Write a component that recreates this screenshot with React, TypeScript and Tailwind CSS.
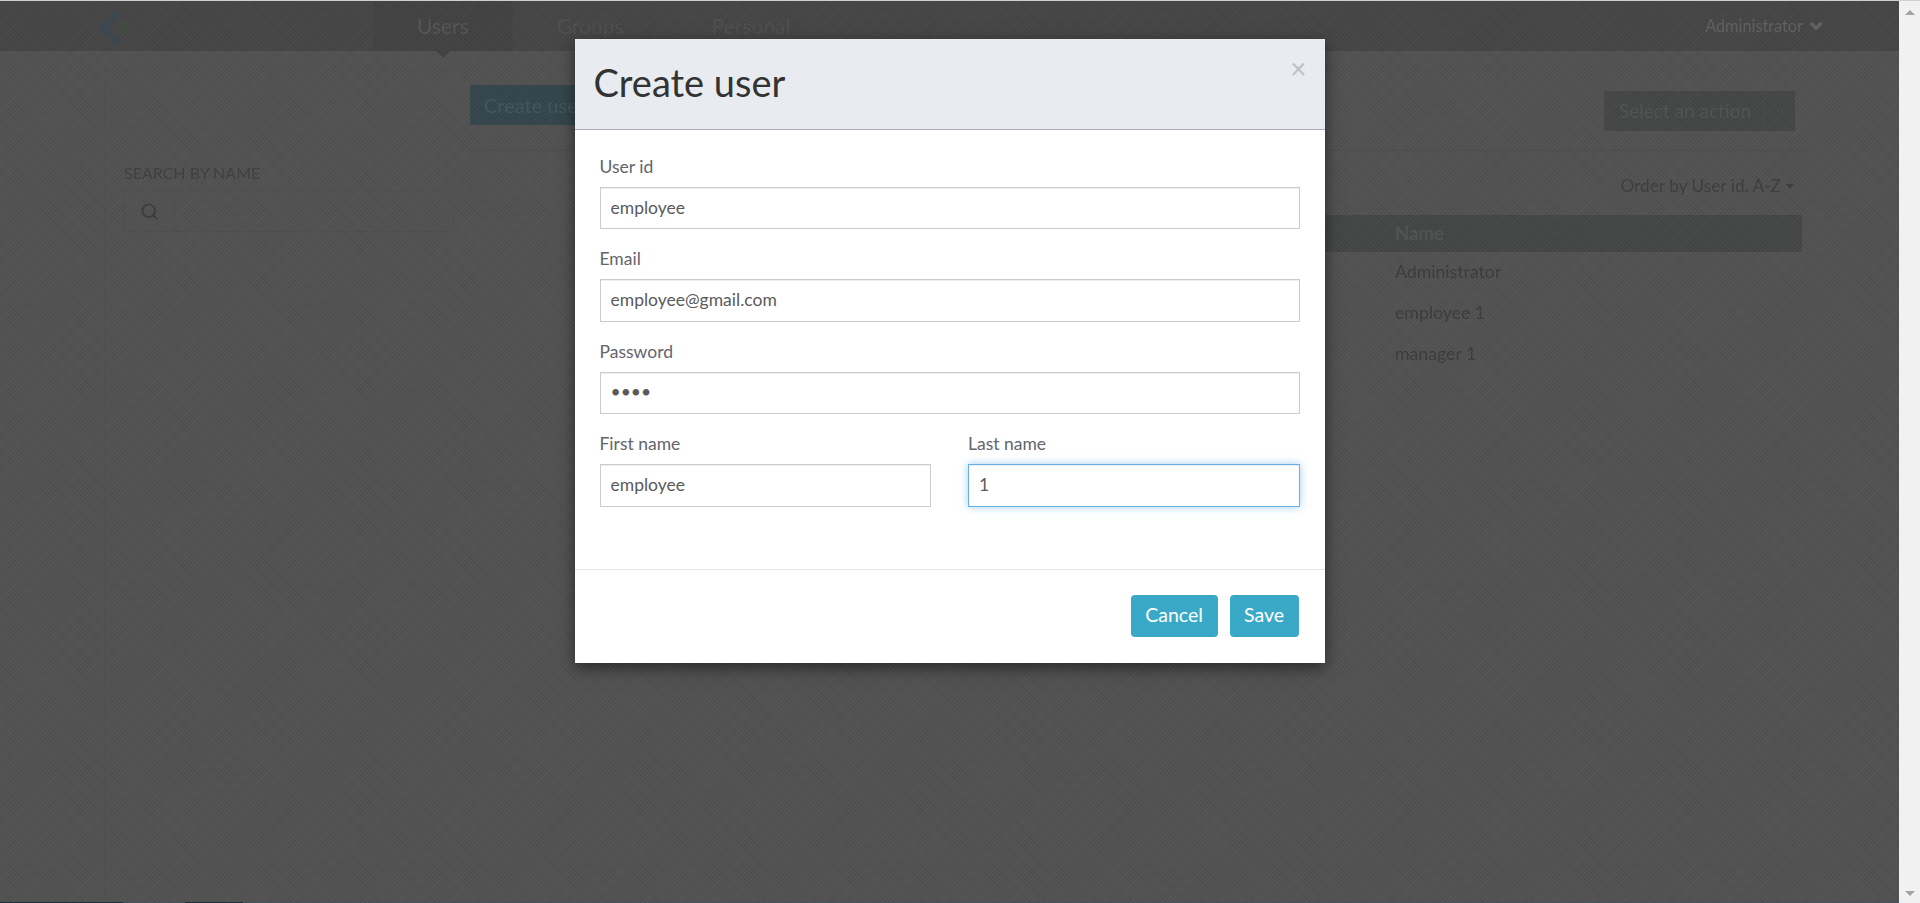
import { ChevronDown, Search } from "lucide-react";

const NAV = ["Users", "Groups", "Personal"];
const ROWS = ["Administrator", "employee 1", "manager 1"];

function Field({
  label,
  value,
  type = "text",
  focused = false,
}: {
  label: string;
  value: string;
  type?: string;
  focused?: boolean;
}) {
  return (
    <div className="mb-[20px]">
      <label className="block h-[25px] mb-[5px] text-[17.5px] leading-[20px] text-[#62656c]">{label}</label>
      <input
        readOnly
        type={type}
        defaultValue={value}
        className={
          focused
            ? "block w-full h-[42.4px] pl-[10px] pb-[2px] border border-[#66afe9] bg-white text-[17.5px] text-[#5a5a5a] outline-none shadow-[inset_0_1px_1px_rgba(0,0,0,0.075),0_0_8px_rgba(102,175,233,0.6)]"
            : "block w-full h-[42.4px] pl-[10px] pb-[2px] border border-[#ccc] bg-white text-[17.5px] text-[#5a5a5a] outline-none shadow-[inset_0_1px_1px_rgba(0,0,0,0.075)]"
        }
      />
    </div>
  );
}

function CreateUserModal() {
  return (
    <div className="mx-auto w-[750px] bg-white shadow-[0_5px_15px_rgba(0,0,0,0.5)]">
      <div className="flex justify-between h-[91px] pl-[19px] pr-[18px] bg-[#e8ecf0] border-b border-[#a9aeba]">
        <h4 className="mt-[21px] text-[38px] leading-[44px] text-[#333]">Create user</h4>
        <button className="mt-[13px] h-[32px] text-[28px] leading-[32px] text-[#bdbfc1]">×</button>
      </div>
      <div className="pt-[27px] px-[25px] pb-[42.4px]">
        <Field label="User id" value="employee" />
        <Field label="Email" value="employee@gmail.com" />
        <Field label="Password" value="1234" type="password" />
        <div className="grid grid-cols-2 gap-x-[37px]">
          <Field label="First name" value="employee" />
          <Field label="Last name" value="1" focused />
        </div>
      </div>
      <div className="flex justify-end gap-[12px] h-[94px] pt-[25px] pr-[26px] border-t border-[#e5e5e5]">
        <button className="h-[42px] w-[87px] pb-[2px] rounded-[4px] bg-[#39a9c7] text-[19.5px] text-white">Cancel</button>
        <button className="h-[42px] w-[69px] pb-[2px] rounded-[4px] bg-[#39a9c7] text-[19.5px] text-white">Save</button>
      </div>
    </div>
  );
}

function Page() {
  return (
    <div className="flex flex-col h-full bg-[#525252] blur-[0.5px]">
      <nav className="flex items-stretch h-[50px] shrink-0 bg-[#464646]">
        <div className="w-[373px] pl-[99px] pt-[11px]">
          <svg width="32" height="32" viewBox="0 0 32 32" fill="none">
            <path d="M18 2 L4 16 L18 30" stroke="#3a4650" strokeWidth="6" />
            <path d="M23 10 L28.5 16 L23 22" stroke="#404c40" strokeWidth="4" />
          </svg>
        </div>
        {NAV.map((item, i) => (
          <a
            key={item}
            className={
              i === 0
                ? "relative px-[44px] bg-[#434343] text-[21px] leading-[50px] text-[#555]"
                : "px-[44px] text-[21px] leading-[50px] text-[#4f4f4f]"
            }
          >
            {item}
            {i === 0 && (
              <span className="absolute left-[63px] top-[50px] border-x-[7px] border-t-[7px] border-x-transparent border-t-[#434343]" />
            )}
          </a>
        ))}
        <div className="ml-auto flex items-center gap-[4px] pr-[74px] text-[16.3px] text-[#606060]">
          Administrator
          <ChevronDown size={18} strokeWidth={4.5} />
        </div>
      </nav>

      <div className="flex flex-1 ml-[104px] mr-[85px] mt-[19px] border-t border-l border-[#4f4f4f]">
        <aside className="w-[365px] shrink-0 pl-[19px] pt-[92px]">
          <div className="h-[20px] mb-[7px] text-[16px] leading-[20px] text-[#404040]">SEARCH BY NAME</div>
          <div className="flex w-[330px] h-[42px] border border-[#4e4e4e]">
            <div className="flex items-center justify-center w-[50px] border-r border-[#4e4e4e] text-[#3e3e3e]">
              <Search size={19} strokeWidth={2.5} />
            </div>
          </div>
        </aside>

        <section className="flex-1 pt-[14px]">
          <div className="flex justify-between items-start h-[46px] pr-[19px]">
            <button className="h-[40px] px-[14px] bg-[#34464c] text-[20px] text-[#44565c]">Create user</button>
            <div className="flex mt-[6px] h-[40px] bg-[#454746] text-[19px] text-[#525453]">
              <span className="w-[161px] pl-[15px] leading-[40px] border-r border-[#4a4a4a]">Select an action</span>
              <span className="flex items-center justify-center w-[30px]">
                <ChevronDown size={12} />
              </span>
            </div>
          </div>
          <div className="mt-[19px] h-px bg-[#4c4c4c]" />
          <div className="flex justify-end items-center gap-[5px] mt-[25px] h-[20px] pr-[20px] text-[17.3px] text-[#3e3e3e]">
            Order by User id. A-Z
            <span className="border-x-[4px] border-t-[5px] border-x-transparent border-t-[#3e3e3e]" />
          </div>
          <div className="ml-[130px] mt-[19px] mr-[12px]">
            <div className="h-[37px] pl-[795px] bg-[#454746] text-[18.5px] leading-[37px] font-bold text-[#525453]">Name</div>
            {ROWS.map((name) => (
              <div key={name} className="h-[41px] pl-[795px] text-[17.7px] leading-[39px] text-[#3c3c3c]">
                {name}
              </div>
            ))}
          </div>
        </section>
      </div>

      <div className="flex h-px shrink-0 bg-[#465359]">
        <div className="w-[123px] bg-[#1b3039]" />
        <div className="w-[62px]" />
        <div className="w-[58px] bg-[#1b3039]" />
      </div>
    </div>
  );
}

function Scrollbar() {
  return (
    <div className="flex flex-col items-center justify-between w-[21px] shrink-0 pt-[9px] pb-[7px] bg-[#f1f1f1]">
      <span className="border-x-[5px] border-b-[5px] border-x-transparent border-b-[#a3a3a3]" />
      <span className="border-x-[5px] border-t-[5px] border-x-transparent border-t-[#a3a3a3]" />
    </div>
  );
}

export default function App() {
  return (
    <div className="flex flex-col h-[903px] overflow-hidden font-['Lato',sans-serif]">
      <div className="h-px shrink-0 bg-[#cfcfcf]" />
      <div className="flex flex-1 min-h-0">
        <main className="relative flex-1 min-w-0 overflow-hidden bg-[#525252]">
          <Page />
          {/* backdrop with the fine woven texture */}
          <div className="absolute inset-0 pt-[38px] bg-[image:repeating-linear-gradient(45deg,rgba(0,0,0,0.045)_0px,rgba(0,0,0,0.045)_1px,transparent_1px,transparent_3px),repeating-linear-gradient(-45deg,rgba(255,255,255,0.025)_0px,rgba(255,255,255,0.025)_1px,transparent_1px,transparent_3px)]">
            <CreateUserModal />
          </div>
        </main>
        <Scrollbar />
      </div>
    </div>
  );
}
